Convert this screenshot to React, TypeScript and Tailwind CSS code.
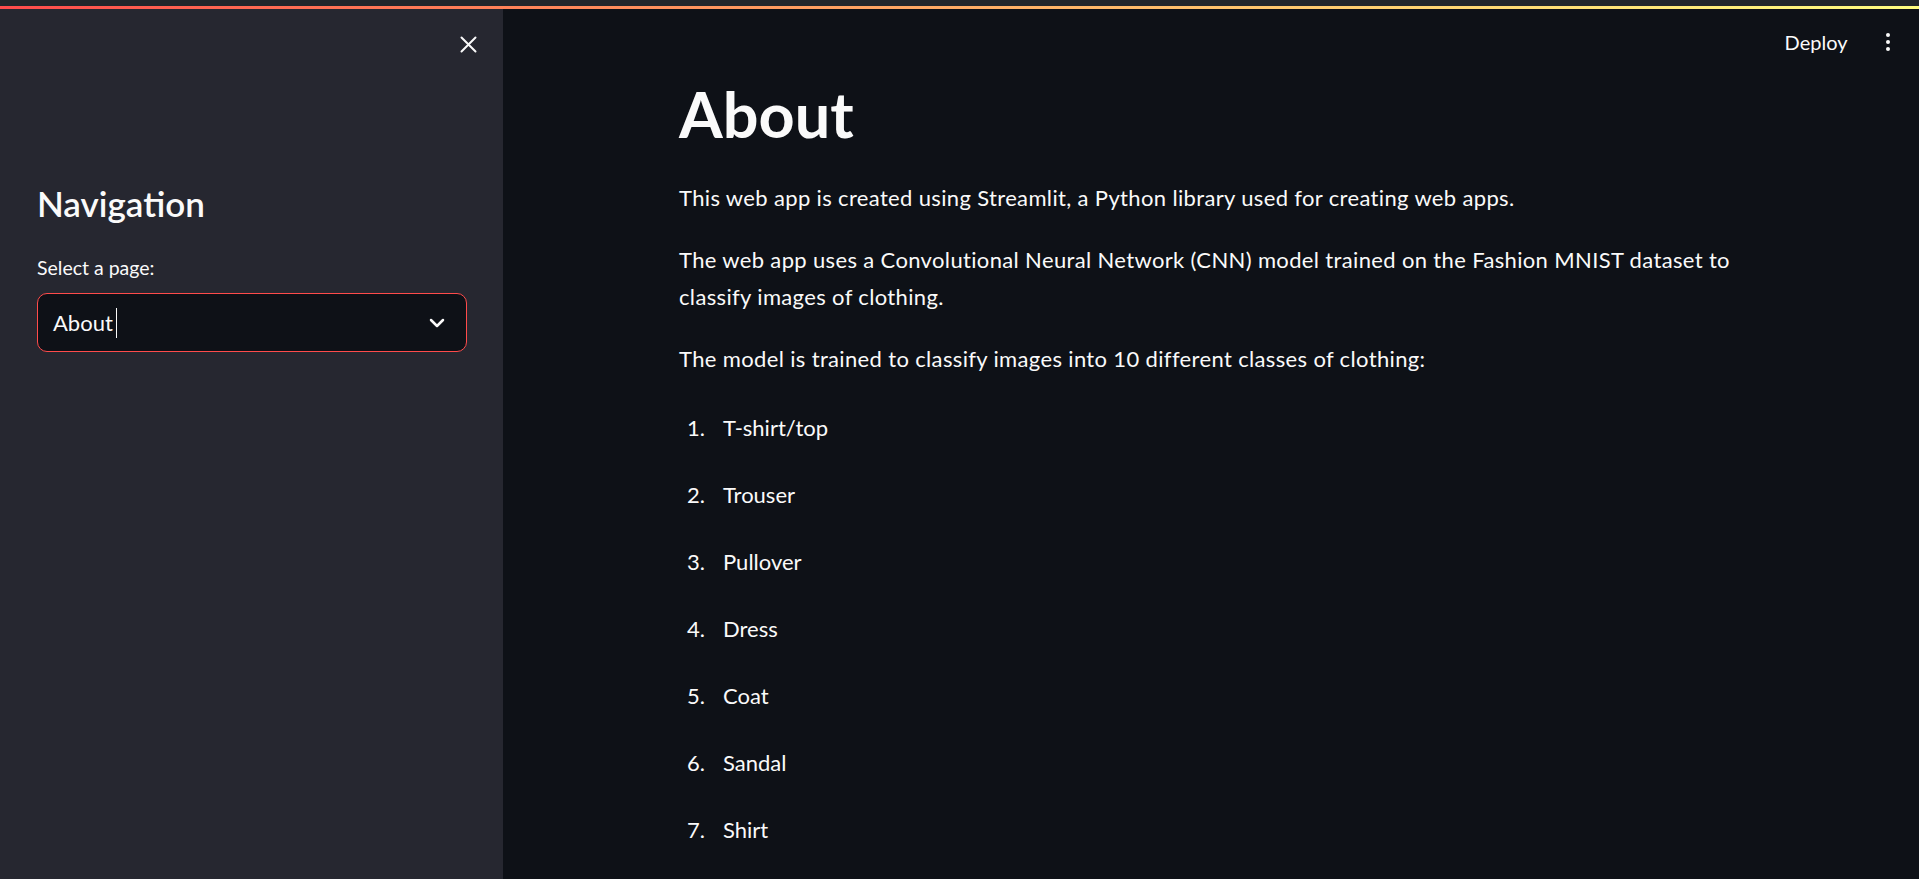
import { FC } from 'react';

const classes = ['T-shirt/top', 'Trouser', 'Pullover', 'Dress', 'Coat', 'Sandal', 'Shirt'];

const App: FC = () => {
  return (
    <div className="h-screen flex flex-col overflow-hidden bg-[#0e1117] text-[#fafafa] font-['Lato','Liberation_Sans',sans-serif]">
      {/* browser strip + streamlit decoration */}
      <div className="h-[6px] bg-[#22262b]" />
      <div className="h-[3px] bg-gradient-to-r from-[#ff4b4b] to-[#fffd80]" />

      <div className="flex flex-1 min-h-0">
        {/* sidebar */}
        <aside className="w-[503px] shrink-0 bg-[#262730] flex flex-col">
          <div className="flex justify-end pt-[27px] pr-[26px]">
            <svg width="17" height="17" viewBox="0 0 17 17" className="text-[#fafafa]">
              <path d="M1.5 1.5 L15.5 15.5 M15.5 1.5 L1.5 15.5" stroke="currentColor" strokeWidth="2" strokeLinecap="round" />
            </svg>
          </div>
          <div className="flex flex-col pl-[37px] pr-[36px]">
            <h2 className="mt-[129px] text-[35px] leading-[1.2] font-semibold">Navigation</h2>
            <label className="mt-[32px] text-[19.5px] leading-[1.2]">Select a page:</label>
            <div className="mt-[14px] h-[59px] flex items-center justify-between rounded-[10px] border border-[#ff4b4b] bg-[#0e1117] pl-[15px] pr-[21px]">
              <div className="flex items-center">
                <span className="text-[22px]">About</span>
                <span className="ml-[3px] w-px h-[30px] bg-[#fafafa]" />
              </div>
              <svg width="16" height="10" viewBox="0 0 16 10">
                <path d="M2 2 L8 8 L14 2" fill="none" stroke="#fafafa" strokeWidth="2.5" strokeLinecap="round" strokeLinejoin="round" />
              </svg>
            </div>
          </div>
        </aside>

        {/* main */}
        <main className="flex-1 flex flex-col min-w-0">
          <header className="h-[66px] shrink-0 flex items-center justify-end pr-[29px]">
            <span className="text-[20px]">Deploy</span>
            <div className="ml-[38px] flex flex-col gap-[2.5px]">
              <span className="w-[4.5px] h-[4.5px] rounded-full bg-[#fafafa]" />
              <span className="w-[4.5px] h-[4.5px] rounded-full bg-[#fafafa]" />
              <span className="w-[4.5px] h-[4.5px] rounded-full bg-[#fafafa]" />
            </div>
          </header>

          <div className="pl-[176px] w-[1240px] flex flex-col">
            <h1 className="mt-[1px] text-[63px] leading-[1.2] font-bold">About</h1>
            <div className="mt-[27px] text-[22px] leading-[37px] tracking-[0.35px] flex flex-col gap-[25px]">
              <p>This web app is created using Streamlit, a Python library used for creating web apps.</p>
              <p>The web app uses a Convolutional Neural Network (CNN) model trained on the Fashion MNIST dataset to classify images of clothing.</p>
              <p>The model is trained to classify images into 10 different classes of clothing:</p>
            </div>
            <ol className="text-[22px] leading-[37px] flex flex-col gap-[30px] mt-[32px]">
              {classes.map((c, i) => (
                <li key={c} className="flex">
                  <span className="w-[44px] pl-[8px]">{i + 1}.</span>
                  <span>{c}</span>
                </li>
              ))}
            </ol>
          </div>
        </main>
      </div>
    </div>
  );
};

export default App;
